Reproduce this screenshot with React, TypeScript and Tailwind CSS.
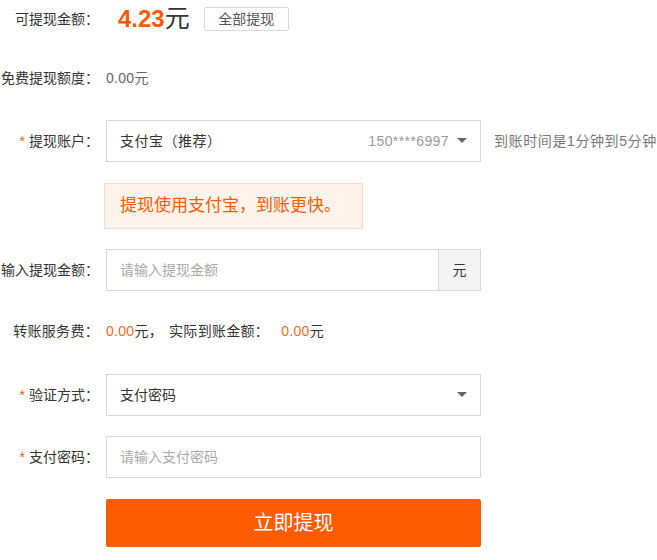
import type { ReactNode } from 'react'

const FONT = { fontFamily: '"Liberation Sans", Arial, "Noto Sans CJK SC", sans-serif' }

function Label({ children, required }: { children: ReactNode; required?: boolean }) {
  return (
    <div className="w-[99px] shrink-0 flex justify-end items-center whitespace-nowrap text-[14px] text-[#333]">
      {required && <span className="text-[#ff5a00] mr-1">*</span>}
      {children}
    </div>
  )
}

function Caret() {
  return (
    <svg width="10" height="6" viewBox="0 0 10 6" className="shrink-0">
      <path d="M0 0 L10 0 L5 5 Z" fill="#666" />
    </svg>
  )
}

export default function App() {
  return (
    <div className="w-[657px] h-[560px] bg-white overflow-hidden" style={FONT}>
      {/* 可提现金额 */}
      <div className="flex items-center h-[38px]">
        <Label>可提现金额：</Label>
        <div className="ml-[19px] flex items-baseline">
          <span className="text-[24px] font-bold text-[#ff5a00]">4.23</span>
          <span className="text-[25px] text-[#333]">元</span>
        </div>
        <button className="ml-[14px] h-[24px] w-[85px] border border-[#d9d9d9] rounded-[2px] text-[14px] text-[#555] bg-white">
          全部提现
        </button>
      </div>

      {/* 免费提现额度 */}
      <div className="flex items-center h-[40px] mt-[20px]">
        <Label>免费提现额度：</Label>
        <span className="ml-[7px] text-[14px] text-[#666] tracking-[0.3px]">0.00元</span>
      </div>

      {/* 提现账户 */}
      <div className="flex items-center mt-[22px]">
        <Label required>提现账户：</Label>
        <div className="ml-[7px] w-[375px] h-[42px] border border-[#d9d9d9] flex items-center px-[13px] text-[14px]">
          <span className="text-[#333] tracking-[0.5px]">支付宝（推荐）</span>
          <span className="ml-auto text-[#999] mr-[8px] tracking-[0.4px]">150****6997</span>
          <Caret />
        </div>
        <span className="ml-[13px] whitespace-nowrap text-[14px] text-[#777] tracking-[0.6px]">
          到账时间是1分钟到5分钟
        </span>
      </div>

      {/* 提示 */}
      <div className="mt-[21px] ml-[104px] w-[259px] h-[46px] bg-[#fff3eb] border border-[#ffd9c6] flex items-center px-[15px] text-[17px] text-[#ff5a00] whitespace-nowrap">
        提现使用支付宝，到账更快。
      </div>

      {/* 输入提现金额 */}
      <div className="flex items-center mt-[20px]">
        <Label>输入提现金额：</Label>
        <div className="ml-[7px] w-[375px] h-[42px] border border-[#d9d9d9] flex">
          <div className="flex-1 flex items-center px-[13px] text-[14px] text-[#aaa]">请输入提现金额</div>
          <div className="w-[42px] border-l border-[#d9d9d9] bg-[#f4f4f4] flex items-center justify-center text-[14px] text-[#333]">
            元
          </div>
        </div>
      </div>

      {/* 服务费 */}
      <div className="flex items-center h-[40px] mt-[20px] text-[14px] tracking-[0.3px]">
        <Label>转账服务费：</Label>
        <span className="ml-[7px] text-[#ff6a1a]">0.00</span>
        <span className="text-[#333]">元，</span>
        <span className="ml-[6px] text-[#333]">实际到账金额：</span>
        <span className="ml-[12px] text-[#ff6a1a]">0.00</span>
        <span className="text-[#333]">元</span>
      </div>

      {/* 验证方式 */}
      <div className="flex items-center mt-[23px]">
        <Label required>验证方式：</Label>
        <div className="ml-[7px] w-[375px] h-[42px] border border-[#d9d9d9] flex items-center px-[13px] text-[14px]">
          <span className="text-[#333]">支付密码</span>
          <span className="ml-auto" />
          <Caret />
        </div>
      </div>

      {/* 支付密码 */}
      <div className="flex items-center mt-[20px]">
        <Label required>支付密码：</Label>
        <div className="ml-[7px] w-[375px] h-[42px] border border-[#d9d9d9] flex items-center px-[13px] text-[14px] text-[#aaa]">
          请输入支付密码
        </div>
      </div>

      {/* 提交 */}
      <div className="flex mt-[21px]">
        <div className="w-[99px] shrink-0" />
        <button className="ml-[7px] w-[375px] h-[48px] bg-[#ff5c00] rounded-[2px] text-white text-[20px]">
          立即提现
        </button>
      </div>
    </div>
  )
}
